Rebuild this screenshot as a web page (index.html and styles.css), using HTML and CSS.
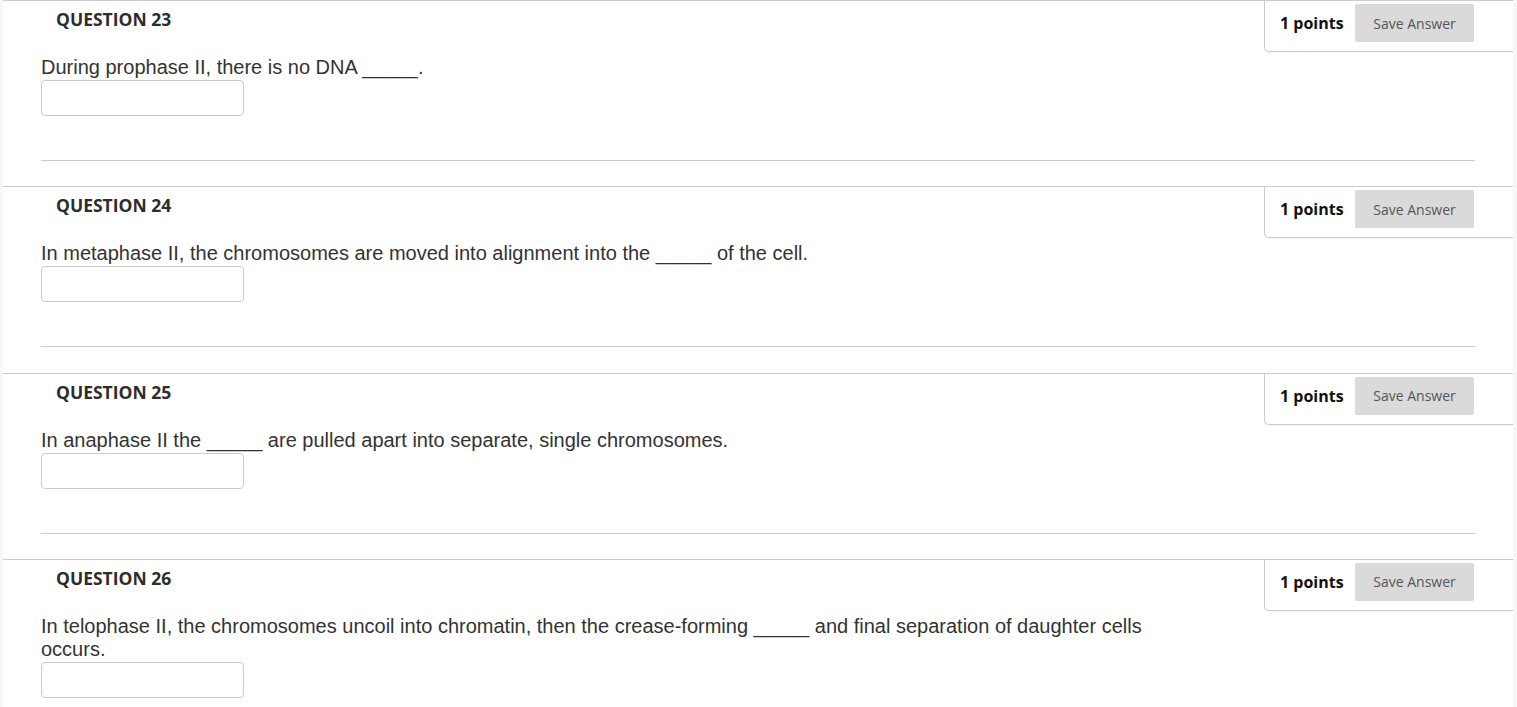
FILE: index.html
```html
<!DOCTYPE html>
<html>
<head>
<meta charset="utf-8">
<link rel="stylesheet" href="styles.css">
</head>
<body>
<div class="page">
  <div class="question">
    <div class="q-head">
      <h3 class="q-title">QUESTION 23</h3>
      <div class="q-points">
        <span class="points">1 points</span>
        <button class="save">Save Answer</button>
      </div>
    </div>
    <div class="q-body">
      <div class="q-text">During prophase II, there is no DNA _____.</div>
      <input class="answer" type="text">
      <hr class="q-rule">
    </div>
  </div>
  <div class="question">
    <div class="q-head">
      <h3 class="q-title">QUESTION 24</h3>
      <div class="q-points">
        <span class="points">1 points</span>
        <button class="save">Save Answer</button>
      </div>
    </div>
    <div class="q-body">
      <div class="q-text">In metaphase II, the chromosomes are moved into alignment into the _____ of the cell.</div>
      <input class="answer" type="text">
      <hr class="q-rule">
    </div>
  </div>
  <div class="question">
    <div class="q-head">
      <h3 class="q-title">QUESTION 25</h3>
      <div class="q-points">
        <span class="points">1 points</span>
        <button class="save">Save Answer</button>
      </div>
    </div>
    <div class="q-body">
      <div class="q-text">In anaphase II the _____ are pulled apart into separate, single chromosomes.</div>
      <input class="answer" type="text">
      <hr class="q-rule">
    </div>
  </div>
  <div class="question">
    <div class="q-head">
      <h3 class="q-title">QUESTION 26</h3>
      <div class="q-points">
        <span class="points">1 points</span>
        <button class="save">Save Answer</button>
      </div>
    </div>
    <div class="q-body">
      <div class="q-text">In telophase II, the chromosomes uncoil into chromatin, then the crease-forming _____ and final separation of daughter cells occurs.</div>
      <input class="answer" type="text">
      <hr class="q-rule">
    </div>
  </div>
</div>
</body>
</html>
```
FILE: styles.css
```css
html, body {
  margin: 0;
  padding: 0;
  background: #f8f8f8;
}
.page {
  margin: 0 4px 0 3px;
  background: #ffffff;
  min-height: 707px;
}
.question {
  border-top: 1px solid #cccccc;
}
.q-head {
  display: flex;
  justify-content: space-between;
  align-items: flex-start;
}
.q-title {
  margin: 0;
  padding: 6px 0 0 53px;
  font-family: "Open Sans", sans-serif;
  font-weight: 700;
  font-size: 17.5px;
  line-height: 24px;
  color: #2d2d2d;
}
.q-points {
  display: flex;
  align-items: center;
  width: 196px;
  height: 38px;
  padding: 3px 37px 9px 15px;
  border-left: 1px solid #cccccc;
  border-bottom: 1px solid #cccccc;
  border-bottom-left-radius: 5px;
  box-shadow: 0 1px 1px rgba(0,0,0,0.04);
  box-sizing: content-box;
}
.points {
  font-family: "Open Sans", sans-serif;
  font-weight: 700;
  font-size: 16px;
  line-height: 22px;
  color: #111111;
  width: 75px;
}
.save {
  width: 119px;
  height: 38px;
  border: none;
  border-radius: 2px;
  background: #dadada;
  font-family: "Open Sans", sans-serif;
  font-size: 14px;
  color: #555555;
  padding: 0;
}
.q-body {
  padding: 4px 38px 0 38px;
}
.q-text {
  font-family: "Liberation Sans", Arial, sans-serif;
  font-size: 20px;
  line-height: 23px;
  color: #333333;
  max-width: 1150px;
}
.answer {
  display: block;
  margin: 1px 0 0 0;
  width: 203px;
  height: 36px;
  box-sizing: border-box;
  border: 1px solid #cccccc;
  border-radius: 4px;
  background: #ffffff;
}
.q-rule {
  margin: 44px 0 25.33px 0;
  border: none;
  border-top: 1px solid #cccccc;
  height: 0;
}
```
